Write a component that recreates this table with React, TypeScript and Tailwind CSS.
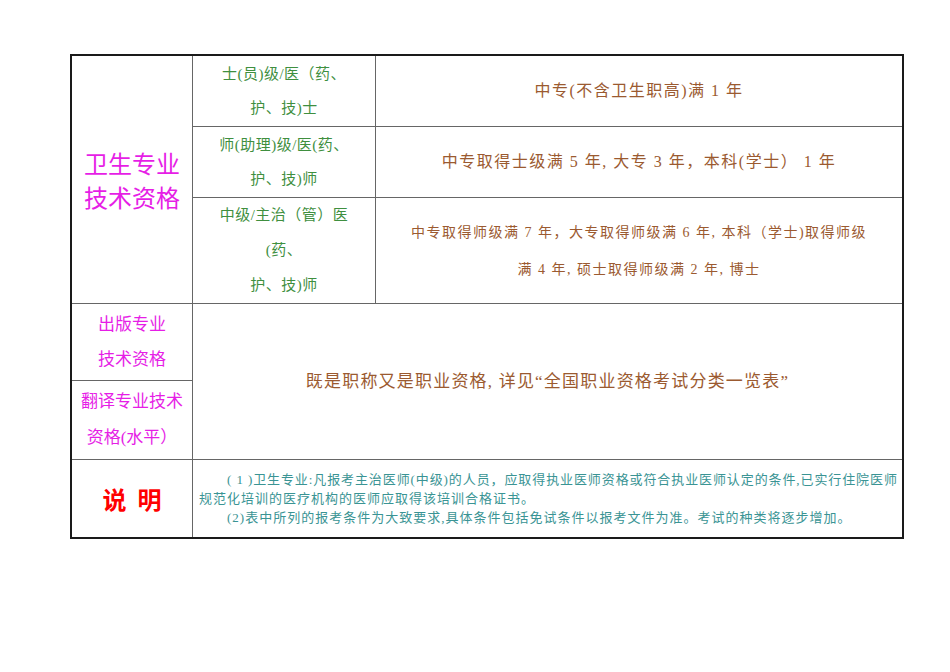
const font = "font-['Liberation_Serif','Noto_Sans_CJK_SC',serif]";

function Cell({ className = "", children }: { className?: string; children?: React.ReactNode }) {
  return <div className={`flex flex-col items-center justify-center bg-white text-center ${className}`}>{children}</div>;
}

export default function App() {
  return (
    <div className={`min-h-[672px] w-[950px] bg-white pl-[70px] pt-[54px] ${font}`}>
      <div className="grid w-[834px] grid-cols-[120px_182px_526px] grid-rows-[70px_70px_105px_76px_78px_77px] gap-px border-2 border-[#1a1a1a] bg-[#666]">
        {/* 卫生专业技术资格 */}
        <Cell className="col-start-1 row-span-3 row-start-1 font-['Noto_Sans_CJK_SC',sans-serif] text-[24px] leading-[34px] text-[#e61ee6]">
          <div>卫生专业</div>
          <div>技术资格</div>
        </Cell>

        <Cell className="col-start-2 row-start-1 text-[15px] leading-[34px] tracking-[0.5px] text-[#3f8f3f]">
          <div>士(员)级/医（药、</div>
          <div>护、技)士</div>
        </Cell>
        <Cell className="col-start-3 row-start-1 text-[16px] tracking-[1.5px] text-[#9b5a30]">
          <div>中专(不含卫生职高)满 1 年</div>
        </Cell>

        <Cell className="col-start-2 row-start-2 text-[15px] leading-[34px] tracking-[0.5px] text-[#3f8f3f]">
          <div>师(助理)级/医(药、</div>
          <div>护、技)师</div>
        </Cell>
        <Cell className="col-start-3 row-start-2 text-[16px] tracking-[1.5px] text-[#9b5a30]">
          <div>中专取得士级满 5 年, 大专 3 年，本科(学士） 1 年</div>
        </Cell>

        <Cell className="col-start-2 row-start-3 text-[15px] leading-[35px] tracking-[0.5px] text-[#3f8f3f]">
          <div>中级/主治（管）医</div>
          <div>(药、</div>
          <div>护、技)师</div>
        </Cell>
        <Cell className="col-start-3 row-start-3 text-[14px] leading-[37px] tracking-[1.5px] text-[#9b5a30]">
          <div className="whitespace-nowrap">中专取得师级满 7 年，大专取得师级满 6 年, 本科（学士)取得师级</div>
          <div>满 4 年, 硕士取得师级满 2 年, 博士</div>
        </Cell>

        {/* 出版 / 翻译 */}
        <Cell className="col-start-1 row-start-4 text-[17px] leading-[35px] text-[#e61ee6]">
          <div>出版专业</div>
          <div>技术资格</div>
        </Cell>
        <Cell className="col-span-2 col-start-2 row-span-2 row-start-4 text-[17px] tracking-[1.2px] text-[#9b5a30]">
          <div>既是职称又是职业资格, 详见“全国职业资格考试分类一览表”</div>
        </Cell>
        <Cell className="col-start-1 row-start-5 text-[17px] leading-[36px] text-[#e61ee6]">
          <div className="whitespace-nowrap">翻译专业技术</div>
          <div>资格(水平）</div>
        </Cell>

        {/* 说明 */}
        <Cell className="col-start-1 row-start-6 font-['Noto_Sans_CJK_SC',sans-serif] text-[24px] font-bold text-[#ff0000]">
          <div className="whitespace-pre">说  明</div>
        </Cell>
        <div className="col-span-2 col-start-2 row-start-6 flex flex-col justify-center bg-white pl-[6px] text-[13px] leading-[19px] tracking-[1px] text-[#3a9494]">
          <div className="whitespace-nowrap pl-[28px] tracking-[0.9px]">( 1 )卫生专业:凡报考主治医师(中级)的人员，应取得执业医师资格或符合执业医师认定的条件,已实行住院医师</div>
          <div className="whitespace-nowrap">规范化培训的医疗机构的医师应取得该培训合格证书。</div>
          <div className="whitespace-nowrap pl-[28px]">(2)表中所列的报考条件为大致要求,具体条件包括免试条件以报考文件为准。考试的种类将逐步增加。</div>
        </div>
      </div>
    </div>
  );
}
